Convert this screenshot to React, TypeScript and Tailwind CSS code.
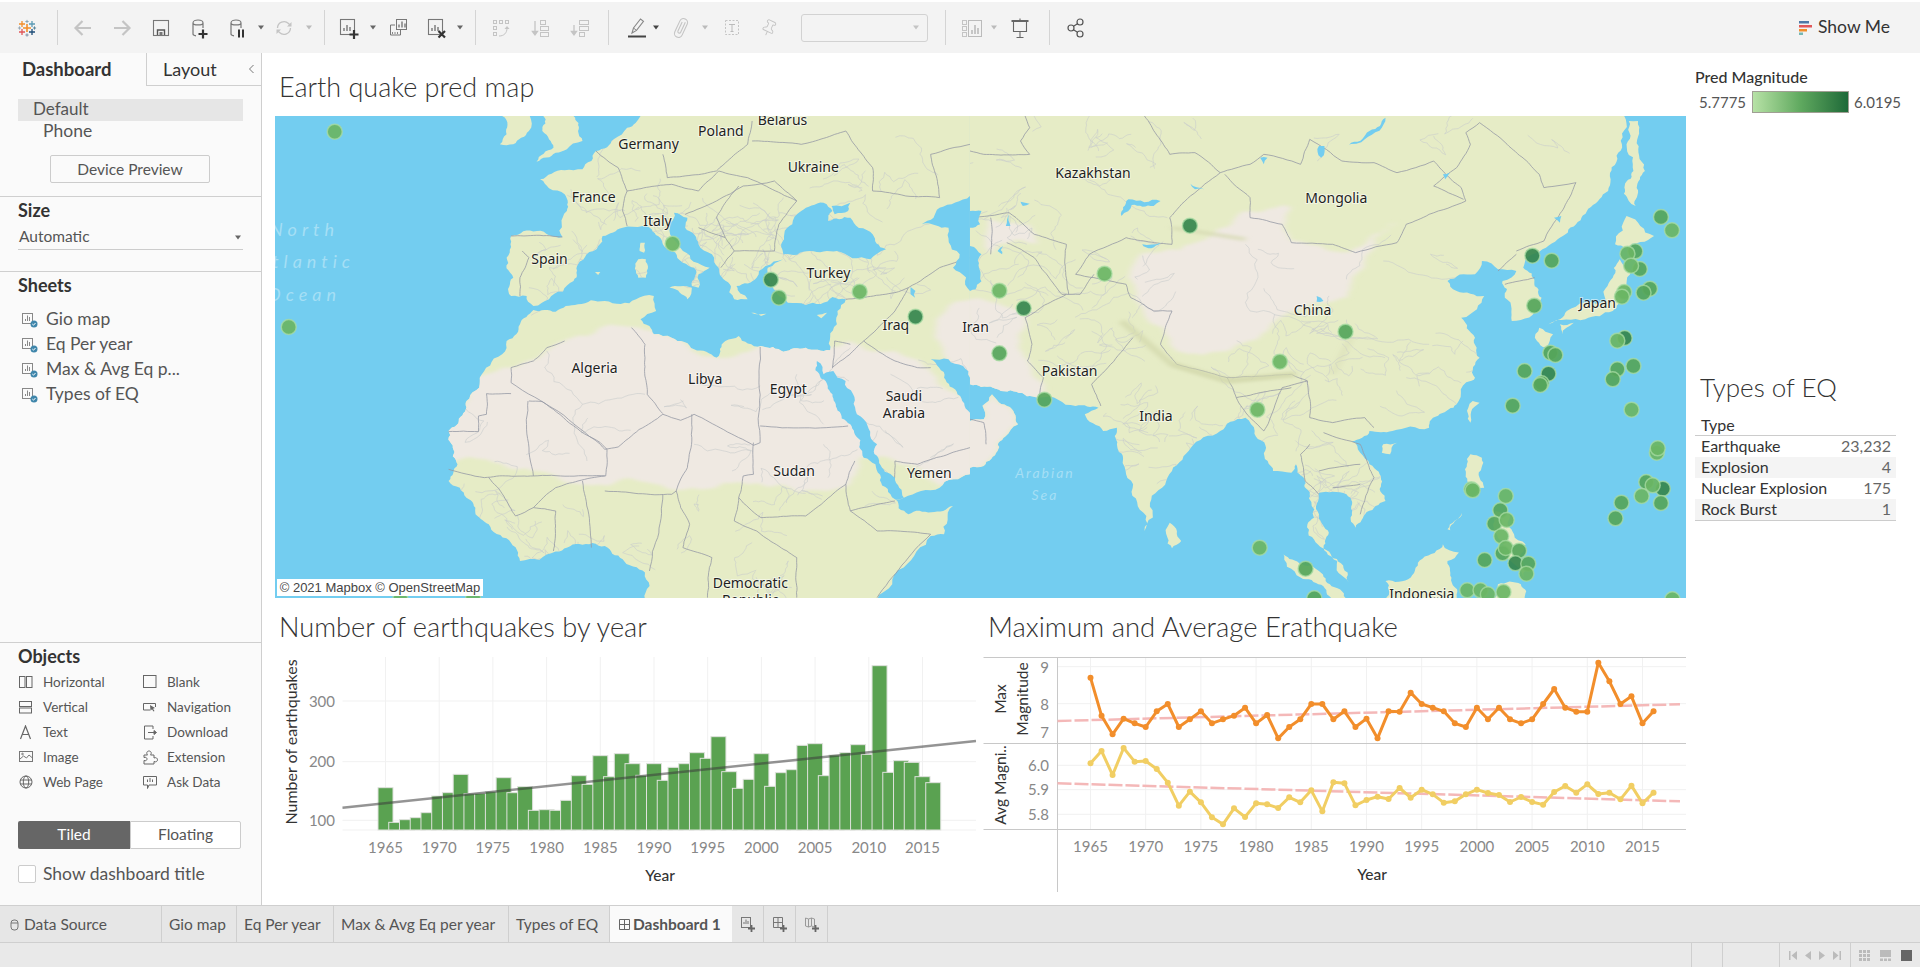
import React from 'react';
import { Pin } from 'lucide-react';

const Z10 = 'translate(-5,-5) scale(0.4464,0.3333)';
const Z11 = 'translate(695,-5) scale(0.4591,0.3333)';
const x10 = (z: number) => z * 0.4464 - 5;
const x11 = (z: number) => z * 0.4591 + 695;
const yz = (z: number) => z / 3 - 5;

const OCEAN = '#73cdf0';
const LAND = '#e6ecc6';
const SAND = '#efe9e2';

const hash = (a: number, b: number) => {
  const s = Math.sin(a * 12.9898 + b * 78.233) * 43758.5453;
  return s - Math.floor(s);
};
type Pt = [number, number];
const split = (a: Pt, b: Pt, depth: number, amp: number, out: Pt[]) => {
  const dx = b[0] - a[0];
  const dy = b[1] - a[1];
  const len = Math.hypot(dx, dy);
  const seam = (a[0] === b[0] && (a[0] === 0 || a[0] === 1568)) || (a[1] === b[1] && (a[1] <= 15 || a[1] >= 1460));
  if (depth === 0 || len < 12 || seam) {
    out.push(b);
    return;
  }
  const k = (hash(a[0] + b[0], a[1] + b[1]) - 0.5) * amp;
  const m: Pt = [(a[0] + b[0]) / 2 - dy * k, (a[1] + b[1]) / 2 + dx * k];
  split(a, m, depth - 1, amp, out);
  split(m, b, depth - 1, amp, out);
};
// breaks straight polygon edges into an irregular coast or border line
const rough = (d: string, amp = 0.32) => {
  let res = '';
  let cur: Pt = [0, 0];
  let start: Pt = [0, 0];
  const re = /([MLZ])\s*([-\d.]*)\s*([-\d.]*)/g;
  let m: RegExpExecArray | null;
  const f = (n: number) => n.toFixed(1);
  while ((m = re.exec(d))) {
    if (m[1] === 'M') {
      cur = [+m[2], +m[3]];
      start = cur;
      res += `M${f(cur[0])} ${f(cur[1])}`;
    } else {
      const to: Pt = m[1] === 'L' ? [+m[2], +m[3]] : start;
      const out: Pt[] = [];
      split(cur, to, 4, amp, out);
      out.forEach((p) => (res += `L${f(p[0])} ${f(p[1])}`));
      cur = to;
      if (m[1] === 'Z') res += 'Z';
    }
  }
  return res;
};
// thin admin lines inside a box, clipped to land later
const web = (x0: number, y0: number, x1: number, y1: number, n: number, seed: number) => {
  let d = '';
  for (let i = 0; i < n; i++) {
    let x = x0 + hash(i + seed, 3.1) * (x1 - x0);
    let y = y0 + hash(i + seed, 7.7) * (y1 - y0);
    d += `M${x.toFixed(0)} ${y.toFixed(0)} `;
    for (let j = 0; j < 3; j++) {
      x += (hash(i + j, seed + 1.3) - 0.5) * 130;
      y += (hash(j + seed, i + 2.9) - 0.5) * 130;
      d += `L${x.toFixed(0)} ${y.toFixed(0)} `;
    }
  }
  return d;
};

const landWest =
  'M830 15 L1568 15 L1568 1090 L1500 1130 L1420 1160 L1400 1165 L1430 1210 L1530 1185 L1510 1270 L1480 1275 L1360 1465 L840 1465 L840 1385 L790 1345 L750 1305 L640 1322 L560 1350 L490 1240 L440 1160 L400 1110 L420 1060 L400 960 L440 870 L470 800 L520 730 L530 690 L560 640 L590 597 L640 602 L690 580 L750 570 L820 565 L860 555 L865 600 L830 625 L850 645 L860 670 L900 680 L950 715 L1000 740 L1020 690 L1050 675 L1100 705 L1150 722 L1200 710 L1255 718 L1270 640 L1290 565 L1260 558 L1200 582 L1160 575 L1120 520 L1115 470 L1150 445 L1110 465 L1090 500 L1045 525 L1070 565 L1040 565 L1030 520 L1005 470 L990 430 L960 400 L930 350 L935 320 L905 305 L895 335 L925 420 L985 470 L960 490 L960 530 L945 525 L950 470 L925 455 L880 400 L855 355 L835 345 L790 350 L745 375 L735 405 L690 460 L680 510 L625 565 L590 585 L575 555 L540 555 L545 500 L530 440 L540 375 L655 378 L665 300 L660 250 L625 232 L605 205 L660 178 L700 175 L720 150 L730 120 L770 85 L800 50 Z';
const islandsWest = [
  'M612 15 L680 15 L690 60 L700 90 L665 115 L640 125 L597 152 L635 110 L625 85 L610 60 Z',
  'M520 15 L582 15 L580 60 L545 100 L515 100 L530 70 Z',
  'M895 530 L945 530 L935 565 Z',
  'M825 445 L842 445 L842 500 L825 500 Z',
  'M830 395 L840 395 L838 425 L828 420 Z',
  'M1078 605 L1112 608 L1100 615 Z',
  'M1225 612 L1248 605 L1235 622 Z',
  'M728 483 L740 483 L735 492 Z',
];
const waterWest = [
  'M1145 400 L1170 340 L1190 300 L1240 275 L1260 300 L1250 330 L1300 320 L1350 370 L1380 415 L1345 445 L1270 420 L1210 420 L1150 430 Z',
  'M1225 750 L1240 790 L1262 780 L1330 925 L1360 1000 L1400 1100 L1420 1160 L1400 1165 L1390 1150 L1330 1040 L1300 940 L1260 850 Z',
  'M1480 745 L1520 745 L1568 800 L1568 905 L1540 850 L1510 800 Z',
  'M1568 255 L1500 290 L1460 340 L1520 350 L1545 430 L1530 470 L1568 540 Z',
  'M1435 528 L1446 540 L1445 560 L1435 550 Z',
  'M1258 285 L1300 275 L1295 300 L1265 310 Z',
];
const sandWest = [
  'M540 770 L660 690 L760 640 L830 650 L870 670 L1000 740 L1100 700 L1210 700 L1260 710 L1300 690 L1400 720 L1480 780 L1600 920 L1600 1100 L1500 1125 L1410 1060 L1320 1040 L1280 1130 L1100 1120 L1000 1130 L800 1100 L600 1080 L380 1060 L380 960 L450 800 Z',
  'M1490 650 L1540 570 L1600 560 L1600 830 L1560 790 L1510 735 Z',
];
const bordersWest = [
  'M540 848 L485 848 L485 910 L467 915 L467 962 L400 962',
  'M540 770 L540 815 L740 1000 L750 1015 L780 1008 L880 910 L920 928 L950 910 L1083 1003 L1098 995 L1098 708',
  'M1083 995 L1083 1090 L1060 1095 L1050 1160 L1100 1220 L1200 1215 L1290 1120 L1310 1050',
  'M1098 945 L1295 945',
  'M580 870 L610 872 L740 995 L755 1015 L752 1095 L590 1095 L578 870',
  'M840 740 L845 850 L880 908 M810 650 L840 700 L840 740',
  'M660 690 L620 710 L590 750 L540 770',
  'M945 910 L935 1070 L910 1140 L920 1190 L940 1240 L925 1310 L990 1340 L980 1460',
  'M400 1075 L480 1100 L590 1095 M490 1100 L550 1215 L590 1190 L640 1200 L635 1320 M700 1110 L720 1310 M750 1095 L690 1110 L640 1130 L590 1190',
  'M750 1140 L900 1150 L910 1140 M880 1150 L850 1380 M1050 1160 L1040 1230 L1090 1260 L1180 1340 L1180 1460',
  'M1290 1120 L1300 1200 L1400 1170 M1300 1200 L1360 1260 L1480 1270 L1360 1460 M1260 770 L1330 690 L1400 750 L1450 770 L1480 770',
  'M1400 1050 L1450 1060 L1568 1010 M1400 1050 L1405 1160 M1300 700 L1265 690 L1260 770 M1330 690 L1400 600 L1430 530',
  'M1290 565 L1400 545 L1430 530 L1500 470 L1568 440',
  'M540 375 L655 378 M565 420 L580 440 L560 500 L560 555',
  'M730 120 L780 170 L800 240 L790 300 L800 345',
  'M800 240 L900 220 L960 240 L1005 180 L1070 200 L1180 270',
  'M880 130 L890 200 L1000 180 L1070 100 L1080 30',
  'M1080 90 L1190 100 L1290 60 L1350 170 L1350 240 L1500 260 L1480 130 L1568 100',
  'M930 310 L1000 270 L1060 225 L1130 210 L1180 270 L1140 340 L1130 420 L1040 420 L1010 470',
  'M960 350 L1020 380 L1040 420 M1050 225 L1000 320 L1020 380',
];
const minorWest = [
  'M700 880 L710 1050 M620 720 L700 880 L840 850 M940 820 L1098 825 M950 1000 L1083 1020 M1180 790 L1240 940 M1240 1000 L1250 1100',
  web(720, 180, 1500, 520, 46, 1),
  web(1000, 300, 1140, 470, 22, 5),
  web(1130, 450, 1430, 560, 14, 9),
  web(420, 1100, 1400, 1450, 34, 13),
  web(450, 800, 1300, 1080, 10, 17),
  web(1300, 800, 1560, 1040, 6, 21),
  web(540, 380, 680, 550, 6, 25),
];

const landEast =
  'M0 15 L1425 15 L1420 100 L1390 240 L1320 340 L1280 385 L1225 430 L1205 470 L1245 560 L1245 590 L1180 630 L1165 560 L1160 510 L1190 480 L1150 475 L1115 450 L1100 490 L1040 510 L1060 540 L1120 555 L1070 620 L1100 680 L1110 740 L1100 800 L1060 880 L1000 950 L920 960 L870 960 L830 990 L870 1060 L905 1170 L840 1250 L820 1150 L760 1145 L760 1210 L770 1310 L825 1415 L800 1350 L735 1240 L740 1150 L710 1060 L700 1085 L660 1080 L620 960 L600 920 L545 960 L440 1080 L430 1100 L380 1260 L340 1090 L320 1000 L320 950 L290 960 L250 910 L280 890 L230 885 L150 860 L50 830 L0 820 Z';
const islandsEast = [
  'M0 930 L30 925 L48 850 L105 940 L60 1020 L30 1065 L0 1070 Z',
  'M1430 315 L1490 375 L1430 410 L1405 400 Z',
  'M1415 445 L1440 480 L1430 560 L1400 600 L1340 625 L1260 640 L1300 600 L1385 570 L1400 500 Z',
  'M1240 650 L1270 670 L1255 710 L1235 690 Z',
  'M1285 640 L1315 635 L1290 670 Z',
  'M1435 30 L1455 30 L1470 180 L1450 285 L1435 270 L1445 180 L1430 100 Z',
  'M1095 870 L1110 875 L1090 935 L1085 910 Z',
  'M900 1000 L930 995 L915 1030 L897 1025 Z',
  'M435 1235 L460 1290 L440 1312 L430 1280 Z',
  'M680 1325 L760 1380 L825 1465 L790 1465 L720 1400 Z',
  'M905 1410 L960 1400 L1030 1300 L1065 1325 L1040 1350 L1060 1465 L905 1465 Z',
  'M1090 1030 L1115 1040 L1110 1100 L1120 1130 L1085 1145 L1080 1090 Z',
  'M1145 1200 L1175 1210 L1185 1270 L1210 1300 L1205 1400 L1160 1330 L1150 1280 Z',
  'M1072 1205 L1040 1255 L1046 1258 Z',
  'M1150 1420 L1200 1420 L1210 1465 L1140 1465 Z',
];
const sandEast = [
  'M370 430 L530 370 L600 300 L700 290 L700 390 L830 420 L870 380 L930 330 L860 450 L820 560 L700 600 L560 720 L450 720 L420 650 L360 570 Z',
  'M45 320 L130 340 L150 400 L60 400 L45 430 Z',
  'M-30 560 L40 570 L130 600 L135 780 L160 860 L50 840 L-30 830 Z',
  'M-30 920 L30 925 L48 850 L105 940 L60 1020 L30 1065 L-30 1080 Z',
];
const waterEast = [
  'M0 300 L25 300 L22 340 L0 350 Z',
  'M0 405 L25 430 L12 535 L0 540 Z',
  'M820 105 L860 85 L905 20 L870 60 L830 95 Z',
  'M330 315 L345 265 L415 270 L400 285 L352 282 Z',
  'M85 310 L88 345 L78 345 Z',
  'M480 218 L510 235 L490 235 Z',
  'M632 140 L648 140 L640 160 Z',
  'M760 105 L772 105 L765 140 Z',
  'M375 400 L415 395 L395 412 Z',
  'M755 555 L770 570 L755 572 Z',
  'M1030 190 L1045 185 L1035 205 Z',
  'M1272 320 L1288 315 L1285 335 Z',
  'M60 420 L72 405 L70 430 Z',
  'M110 272 L130 278 L115 285 Z',
];
const bordersEast = [
  'M0 120 L30 130 L130 130 L110 90 L130 50 L120 15 M380 15 L435 130 L490 125 L545 185',
  'M545 185 L610 160 L640 130 L720 160 L740 85 L810 150 L880 155 L930 185 L1010 150 L1070 230 L1080 270 L1000 310 L950 340 L930 395 L840 425 L790 400 L700 395 L680 340 L610 320 L610 260 L555 190',
  'M545 185 L480 255 L435 320 L440 400 L340 380 L260 430 L230 490 L270 500 L340 520 L350 560 L400 600 L440 600 L415 700 L450 760 L560 800 L700 790 L735 810 L740 920 L790 935 L860 920 L880 950',
  'M1320 215 L1250 230 L1240 190 L1170 100 L1110 35 L1080 65 L1090 100 L1060 170 L1010 225 L1075 265',
  'M1190 420 L1250 390 L1280 320 L1320 215 M1150 480 L1190 430 M1165 520 L1230 500',
  'M45 320 L45 430 M0 320 L85 305 L140 370 L210 400 L215 550 M80 395 L140 440 L200 550 L240 550 L270 490',
  'M120 620 L135 700 L125 750 L160 800 L150 860 M120 620 L210 550',
  'M355 680 L265 820 L285 885 M0 925 L30 935 L35 1000',
  'M580 860 L610 920 L640 960 M735 810 L680 830 L660 900 L640 960 M560 800 L580 860 L700 830',
  'M740 1000 L720 1030 L730 1110 L760 1150 M770 965 L850 1000 L880 1100 L850 1210 M760 1080 L850 1060 M850 1120 L790 1130',
];
const minorEast = [
  'M200 200 L300 250 L430 320 M260 15 L280 120 M600 400 L610 600 L820 680 M820 680 L1000 700 M900 450 L1060 500 M950 800 L1060 880',
  web(0, 130, 450, 620, 24, 31),
  web(730, 1000, 880, 1230, 20, 35),
  web(700, 450, 1100, 900, 24, 39),
  web(300, 800, 620, 1100, 16, 43),
  web(0, 20, 1300, 120, 12, 47),
  web(180, 500, 400, 750, 16, 51),
  web(550, 780, 760, 1000, 14, 55),
];

const markersWest: [number, number, string][] = [
  [145, 62, 'l'], [902, 398, 'l'], [1122, 506, 'd'], [1140, 560, 'm'], [1321, 542, 'l'], [1446, 617, 'd'], [42, 648, 'l'], [292, 1465, 'l'], [455, 1462, 'l'],
];
const markersEast: [number, number, string][] = [
  [479, 344, 'd'], [293, 488, 'l'], [64, 539, 'l'], [117, 592, 'd'], [64, 727, 'm'], [162, 866, 'm'], [626, 896, 'l'], [675, 752, 'l'], [818, 662, 'm'],
  [1225, 434, 'd'], [1267, 449, 'm'], [1229, 584, 'm'], [1505, 318, 'm'], [1529, 358, 'l'], [1449, 421, 'm'], [1432, 428, 'l'], [1459, 474, 'm'], [1440, 464, 'l'],
  [1425, 543, 'l'], [1420, 557, 'l'], [1481, 533, 'm'], [1467, 545, 'm'], [1426, 681, 'd'], [1410, 689, 'l'], [1264, 725, 'm'], [1275, 732, 'm'], [1208, 780, 'm'],
  [1260, 788, 'd'], [1245, 817, 'm'], [1242, 822, 'm'], [1445, 765, 'm'], [1410, 775, 'm'], [1400, 805, 'm'], [1182, 884, 'm'], [1441, 896, 'l'], [1496, 1025, 'l'],
  [1498, 1012, 'l'], [1473, 1113, 'm'], [1509, 1133, 'd'], [1487, 1123, 'l'], [1463, 1155, 'l'], [1419, 1175, 'm'], [1505, 1176, 'm'], [1406, 1222, 'm'], [1092, 1135, 'l'],
  [1095, 1138, 'l'], [1167, 1155, 'l'], [1155, 1198, 'm'], [1142, 1238, 'm'], [1169, 1227, 'l'], [1160, 1327, 'm'], [1157, 1276, 'l'], [1167, 1311, 'l'], [1196, 1319, 'm'],
  [1121, 1347, 'm'], [1188, 1357, 'd'], [1216, 1358, 'm'], [1212, 1388, 'l'], [631, 1310, 'l'], [731, 1373, 'm'], [750, 1462, 'm'], [1083, 1438, 'l'], [1112, 1438, 'l'],
  [1128, 1450, 'l'], [1162, 1443, 'l'], [1530, 1465, 'l'],
];
const markerFill: Record<string, string> = { l: '#6ab564', m: '#55a55a', d: '#35854d' };

const labelsWest: [string, number, number][] = [
  ['Belarus', 1148, 27], ['Poland', 1010, 60], ['Germany', 848, 98], ['Ukraine', 1217, 168], ['France', 725, 258], ['Italy', 868, 330], ['Spain', 626, 445],
  ['Turkey', 1251, 487], ['Iraq', 1402, 642], ['Algeria', 727, 770], ['Libya', 975, 805], ['Egypt', 1161, 833], ['Saudi', 1420, 855], ['Arabia', 1420, 905],
  ['Yemen', 1477, 1085], ['Sudan', 1174, 1080], ['Democratic', 1076, 1417], ['Republic', 1076, 1468],
];
const labelsEast: [string, number, number][] = [
  ['Iran', 12, 647], ['Kazakhstan', 268, 185], ['Mongolia', 798, 262], ['China', 746, 598], ['Pakistan', 217, 781], ['India', 405, 915], ['Japan', 1367, 575], ['Indonesia', 984, 1450],
];

function MapLayer({ id, transform, land, islands, sand, water, borders, minor }: { id: string; transform: string; land: string; islands: string[]; sand: string[]; water: string[]; borders: string[]; minor: string[] }) {
  const shapes = [land, ...islands].map((d) => rough(d));
  return (
    <g transform={transform}>
      <clipPath id={id}>{shapes.map((d, i) => <path key={i} d={d} />)}</clipPath>
      {shapes.map((d, i) => <path key={i} d={d} fill={LAND} />)}
      <g clipPath={`url(#${id})`}>
        <g filter="url(#soft)">{sand.map((d) => <path key={d} d={rough(d)} fill={SAND} />)}</g>
        {minor.map((d, i) => <path key={i} d={rough(d)} fill="none" stroke="#c9cccd" strokeWidth="0.6" vectorEffect="non-scaling-stroke" />)}
      </g>
      {borders.map((d) => <path key={d} d={rough(d, 0.07)} fill="none" stroke="#9599a5" strokeWidth="0.8" vectorEffect="non-scaling-stroke" />)}
      {water.map((d) => <path key={d} d={rough(d)} fill={OCEAN} />)}
    </g>
  );
}

function WorldMap() {
  return (
    <div className="relative h-[482px] w-[1411px] overflow-hidden">
      <svg width="1411" height="482" viewBox="0 0 1411 482" className="block">
        <defs>
          <filter id="soft" x="-10%" y="-10%" width="120%" height="120%"><feGaussianBlur stdDeviation="7 5" /></filter>
        </defs>
        <rect width="1411" height="482" fill={OCEAN} />
        <MapLayer id="clipW" transform={Z10} land={landWest} islands={islandsWest} sand={sandWest} water={waterWest} borders={bordersWest} minor={minorWest} />
        <MapLayer id="clipE" transform={Z11} land={landEast} islands={islandsEast} sand={sandEast} water={waterEast} borders={bordersEast} minor={minorEast} />
        <g transform={Z11} filter="url(#soft)">
          <path d="M330 630 L440 760 L560 810 L710 790" fill="none" stroke="#d3d8ac" strokeWidth="6" vectorEffect="non-scaling-stroke" opacity="0.8" />
          <path d="M440 350 L600 385 M830 680 L790 790" fill="none" stroke="#d6dab2" strokeWidth="4" vectorEffect="non-scaling-stroke" opacity="0.7" />
        </g>
        <g fontStyle="italic" fill="#a5dff5" fontSize="18" letterSpacing="5" textAnchor="end">
          <text x="64" y="120">North</text>
          <text x="80" y="152">Atlantic</text>
          <text x="66" y="185">Ocean</text>
        </g>
        <g fontStyle="italic" fill="#a5dff5" fontSize="14" letterSpacing="2" textAnchor="middle">
          <text x="770" y="362">Arabian</text>
          <text x="770" y="384">Sea</text>
        </g>
        <g fontSize="14" fill="#1f1f1f" textAnchor="middle" className="font-['Noto_Sans',sans-serif]" stroke="#ffffff" strokeOpacity="0.55" strokeWidth="2" paintOrder="stroke">
          {labelsWest.map(([t, x, y]) => <text key={t} x={x10(x)} y={yz(y) + 5}>{t}</text>)}
          {labelsEast.map(([t, x, y]) => <text key={t} x={x11(x)} y={yz(y) + 5}>{t}</text>)}
        </g>
        {markersWest.map(([x, y, c]) => (
          <circle key={`w${x}${y}`} cx={x10(x)} cy={yz(y)} r="7.5" fill={markerFill[c]} fillOpacity="0.92" stroke="#a9dca4" strokeOpacity="0.75" strokeWidth="1.5" />
        ))}
        {markersEast.map(([x, y, c]) => (
          <circle key={`e${x}${y}`} cx={x11(x)} cy={yz(y)} r="7.5" fill={markerFill[c]} fillOpacity="0.92" stroke="#a9dca4" strokeOpacity="0.75" strokeWidth="1.5" />
        ))}
      </svg>
      <div className="absolute left-[2px] top-[463px] h-[17px] w-[206px] bg-white text-center text-[13px] leading-[17px] text-[#444] font-['Liberation_Sans',sans-serif]">
        © 2021 Mapbox © OpenStreetMap
      </div>
    </div>
  );
}

const barTops = [560, 664, 656, 650, 635, 585, 575, 520, 578, 577, 572, 530, 575, 557, 628, 626, 628, 598, 524, 550, 464, 527, 458, 488, 523, 488, 538, 499, 488, 455, 472, 407, 512, 562, 535, 458, 556, 515, 506, 433, 428, 524, 462, 455, 431, 460, 194, 514, 479, 484, 527, 545];
const maxMag = [230, 344, 400, 353, 367, 378, 331, 309, 378, 355, 331, 367, 355, 344, 320, 367, 342, 412, 378, 355, 309, 309, 355, 331, 378, 353, 412, 331, 332, 275, 309, 320, 331, 367, 378, 320, 355, 320, 355, 367, 355, 309, 264, 320, 332, 332, 185, 241, 309, 286, 367, 331];
const avgMag = [487, 450, 522, 441, 482, 480, 504, 545, 614, 572, 604, 649, 670, 622, 648, 607, 610, 621, 589, 604, 568, 631, 544, 547, 613, 597, 587, 594, 561, 590, 566, 580, 605, 601, 580, 566, 576, 582, 603, 588, 603, 611, 573, 555, 575, 550, 579, 575, 595, 554, 607, 575];
const ticks = [1965, 1970, 1975, 1980, 1985, 1990, 1995, 2000, 2005, 2010, 2015];

function BarChart() {
  const bx = (i: number) => 385.5 + i * 10.74;
  return (
    <svg width="708" height="255" viewBox="275 650 708 255" className="block">
      {ticks.map((t, i) => <line key={t} x1={bx(i * 5)} x2={bx(i * 5)} y1="656" y2="829" stroke="#f1f1f1" />)}
      {[700, 760.7, 819.3, 829].map((y) => <line key={y} x1="342.5" x2="976" y1={y} y2={y} stroke="#f1f1f1" />)}
      {barTops.map((t, i) => {
        const top = 600 + t / 3;
        return <rect key={i} x={bx(i) - 7.5} y={top} width="15" height={829 - top} fill="#5aa251" stroke="#dfe2dd" strokeWidth="1" />;
      })}
      <line x1="342.5" y1="806.7" x2="976" y2="740" stroke="#3c3c3c" strokeOpacity="0.55" strokeWidth="2.5" />
      <g fontSize="15" fill="#888" textAnchor="end">
        <text x="335" y="706">300</text>
        <text x="335" y="766">200</text>
        <text x="335" y="825">100</text>
      </g>
      <g fontSize="15" fill="#888" textAnchor="middle">
        {ticks.map((t, i) => <text key={t} x={bx(i * 5)} y="852">{t}</text>)}
      </g>
      <text x="660" y="880" textAnchor="middle" fontSize="15.5" fill="#333" fontWeight="500">Year</text>
      <text transform="translate(297,741) rotate(-90)" textAnchor="middle" fontSize="16" fill="#333">Number of earthquakes</text>
    </svg>
  );
}

function LineChart() {
  const lx = (i: number) => 1090.5 + i * 11.04;
  const pts = (a: number[]) => a.map((z, i) => `${lx(i)},${600 + z / 3}`).join(' ');
  return (
    <svg width="703" height="255" viewBox="983 650 703 255" className="block">
      {ticks.map((t, i) => <line key={t} x1={lx(i * 5)} x2={lx(i * 5)} y1="657" y2="829" stroke="#f1f1f1" />)}
      {[665.7, 702.7, 764.3, 788.7, 813.3].map((y) => <line key={y} x1="1057" x2="1686" y1={y} y2={y} stroke="#f1f1f1" />)}
      <line x1="983.5" x2="1686" y1="656.5" y2="656.5" stroke="#c8c8c8" />
      <line x1="983.5" x2="1686" y1="742.5" y2="742.5" stroke="#c8c8c8" />
      <line x1="983.5" x2="1686" y1="828.5" y2="828.5" stroke="#c8c8c8" />
      <line x1="1057.5" x2="1057.5" y1="656" y2="891" stroke="#c8c8c8" />
      <line x1="1057.5" y1="720" x2="1680" y2="703.3" stroke="#f4b8b8" strokeWidth="2.5" strokeDasharray="14 3" />
      <line x1="1057.5" y1="782.3" x2="1680" y2="800.3" stroke="#f4b8b8" strokeWidth="2.5" strokeDasharray="14 3" />
      <polyline points={pts(maxMag)} fill="none" stroke="#f28e2b" strokeWidth="3" strokeLinejoin="round" />
      {maxMag.map((z, i) => <circle key={i} cx={lx(i)} cy={600 + z / 3} r="3" fill="#f28e2b" />)}
      <polyline points={pts(avgMag)} fill="none" stroke="#f1ce63" strokeWidth="3" strokeLinejoin="round" />
      {avgMag.map((z, i) => <circle key={i} cx={lx(i)} cy={600 + z / 3} r="3" fill="#f1ce63" />)}
      <g fontSize="15" fill="#888" textAnchor="end">
        <text x="1049" y="672">9</text>
        <text x="1049" y="709">8</text>
        <text x="1049" y="737">7</text>
        <text x="1049" y="770">6.0</text>
        <text x="1049" y="794">5.9</text>
        <text x="1049" y="819">5.8</text>
      </g>
      <g fontSize="15" fill="#888" textAnchor="middle">
        {ticks.map((t, i) => <text key={t} x={lx(i * 5)} y="851">{t}</text>)}
      </g>
      <text x="1372" y="879" textAnchor="middle" fontSize="15.5" fill="#333" fontWeight="500">Year</text>
      <g textAnchor="middle" fontSize="15.5" fill="#333">
        <text transform="translate(1006,698) rotate(-90)">Max</text>
        <text transform="translate(1028,698) rotate(-90)">Magnitude</text>
        <text transform="translate(1006,784) rotate(-90)">Avg Magni..</text>
      </g>
    </svg>
  );
}

/* toolbar icons */
const Ico = ({ children, className = '' }: { children: React.ReactNode; className?: string }) => (
  <svg width="24" height="24" viewBox="0 0 24 24" fill="none" className={`shrink-0 ${className}`}>{children}</svg>
);
const Caret = ({ className = '', color = '#666' }: { className?: string; color?: string }) => (
  <svg width="8" height="5" viewBox="0 0 8 5" className={`shrink-0 ${className}`}><path d="M1 0.5h6L4 4.5z" fill={color} /></svg>
);
const Sep = ({ className = '' }: { className?: string }) => <div className={`h-[35px] w-px shrink-0 bg-[#d4d4d4] ${className}`} />;
const Plus = ({ x, y }: { x: number; y: number }) => <path d={`M${x - 4.5} ${y}h9M${x} ${y - 4.5}v9`} stroke="#333" strokeWidth="2.2" />;
const Cyl = ({ stroke = '#777' }: { stroke?: string }) => (
  <path d="M6 7c0-4 10-4 10 0v5M6 7c0 2.6 10 2.6 10 0M6 7v11c0 1 1 1.6 3 1.8" stroke={stroke} strokeWidth="1.2" />
);
const Bars = ({ x, y, c = '#777' }: { x: number; y: number; c?: string }) => (
  <path d={`M${x} ${y}v-3M${x + 3} ${y}v-6M${x + 6} ${y}v-4`} stroke={c} strokeWidth="1.4" />
);

function Logo() {
  const p = (x: number, y: number, s: number, c: string, w = 1.3) => (
    <path key={`${x}${y}`} d={`M${x - s} ${y}h${2 * s}M${x} ${y - s}v${2 * s}`} stroke={c} strokeWidth={w} />
  );
  return (
    <Ico className="ml-[15px]">
      {p(12, 12, 4, '#f28e2b', 1.6)}
      {p(7, 8, 3, '#f28e2b')}
      {p(17, 8, 3, '#5b9bb5')}
      {p(7, 16, 3, '#e15759')}
      {p(17, 16, 3, '#1f4e79')}
      {p(12, 5.5, 1.6, '#8aa5b5', 1)}
      {p(12, 19, 1.6, '#7f8fa6', 1)}
      {p(4.5, 12, 1.6, '#9aa9b5', 1)}
      {p(19.5, 12, 1.6, '#59879b', 1)}
    </Ico>
  );
}

function Toolbar() {
  return (
    <div className="mt-[2px] flex h-[51px] shrink-0 items-center bg-[#f3f3f3]">
      <Logo />
      <Sep className="ml-[18px]" />
      <Ico className="ml-[13px]"><path d="M20 12H5M11.5 5l-7 7 7 7" stroke="#c4c4c4" strokeWidth="2.2" /></Ico>
      <Ico className="ml-[15px]"><path d="M4 12h15M12.5 5l7 7-7 7" stroke="#c4c4c4" strokeWidth="2.2" /></Ico>
      <Ico className="ml-[15px]"><rect x="4.5" y="4.5" width="15" height="15" stroke="#777" strokeWidth="1.1" /><path d="M8.5 19v-5h7v5" stroke="#555" strokeWidth="1.4" /><rect x="10.5" y="16" width="3" height="3" fill="#777" /></Ico>
      <Ico className="ml-[14px]"><Cyl /><Plus x={16} y={18} /></Ico>
      <Ico className="ml-[14px]"><Cyl /><path d="M14 13.5v8M18 13.5v8" stroke="#333" strokeWidth="2" /></Ico>
      <Caret className="ml-[8px]" />
      <Ico className="ml-[7px]"><path d="M5.5 12a6.5 6.5 0 0 1 11-4.5l2 2M18.5 12a6.5 6.5 0 0 1-11 4.5l-2-2" stroke="#c4c4c4" strokeWidth="1.3" /><path d="M19.5 6v4.5H15M4.5 18v-4.5H9" fill="#c4c4c4" /></Ico>
      <Caret className="ml-[9px]" color="#bbb" />
      <Sep className="ml-[11px]" />
      <Ico className="ml-[11px]"><rect x="4.5" y="3.5" width="14" height="15" stroke="#777" strokeWidth="1.1" /><Bars x={8} y={15} /><Plus x={18} y={18.5} /></Ico>
      <Caret className="ml-[9px]" />
      <Ico className="ml-[9px]"><rect x="10.5" y="3.5" width="10" height="10" fill="#f3f3f3" stroke="#777" /><path d="M9 9H4.5v10h10v-5" stroke="#777" /><Bars x={13} y={11.5} /><path d="M6.5 16v2M9 16v2M11.5 16v2" stroke="#888" /></Ico>
      <Ico className="ml-[14px]"><rect x="4.5" y="3.5" width="14" height="15" stroke="#777" strokeWidth="1.1" /><Bars x={8} y={15} /><path d="M14.5 15l6.5 6.5M21 15l-6.5 6.5" stroke="#333" strokeWidth="2.2" /></Ico>
      <Caret className="ml-[8px]" />
      <Sep className="ml-[11px]" />
      <Ico className="ml-[13px]"><g stroke="#c4c4c4"><rect x="4.5" y="4.5" width="3" height="3" /><rect x="10.5" y="4.5" width="3" height="3" /><rect x="16.5" y="4.5" width="3" height="3" /><rect x="4.5" y="10.5" width="3" height="3" /><rect x="4.5" y="16.5" width="3" height="3" /><path d="M10 20c5 0 8-3 8-8" /></g><path d="M15.5 13l2.5-3 2.5 3z" fill="#c4c4c4" /></Ico>
      <Ico className="ml-[16px]"><path d="M6 5v14M3.5 15.5L6 19l2.5-3.5z" stroke="#c4c4c4" strokeWidth="1.3" fill="#c4c4c4" /><g stroke="#c4c4c4"><rect x="11.5" y="4.5" width="5" height="4" /><rect x="11.5" y="10.5" width="8" height="4" /><rect x="11.5" y="16.5" width="8" height="4" /></g></Ico>
      <Ico className="ml-[15px]"><path d="M6 9v10M3.5 15.5L6 19l2.5-3.5z" stroke="#c4c4c4" strokeWidth="1.3" fill="#c4c4c4" /><g stroke="#c4c4c4"><rect x="11.5" y="4.5" width="9" height="4" /><rect x="11.5" y="10.5" width="9" height="4" /><rect x="11.5" y="16.5" width="5" height="4" /></g></Ico>
      <Sep className="ml-[16px]" />
      <Ico className="ml-[16px]"><path d="M7 17l1.5-5 7-9 3 2.4-7 9z" stroke="#888" strokeWidth="1.1" /><path d="M8.5 12l3 2.4" stroke="#888" /><rect x="3" y="19.5" width="18" height="2" fill="#444" /></Ico>
      <Caret className="ml-[3px]" color="#444" />
      <Ico className="ml-[9px]"><g transform="rotate(25 12 12)" stroke="#c4c4c4" strokeWidth="1.1"><rect x="8" y="2" width="8" height="20" rx="4" /><path d="M10.5 6v10a1.5 1.5 0 0 0 3 0V5" /></g></Ico>
      <Caret className="ml-[8px]" color="#bbb" />
      <Ico className="ml-[11px]"><rect x="5.5" y="4.5" width="13" height="14" stroke="#c4c4c4" strokeDasharray="2 1.5" /><path d="M9 8.5h6M12 8.5v7M10.5 15.5h3" stroke="#bbb" /></Ico>
      <div className="ml-[13px] flex h-[24px] w-[24px] shrink-0 rotate-[25deg] items-center justify-center"><Pin size={18} color="#c4c4c4" strokeWidth={1.2} /></div>
      <div className="ml-[20px] flex h-[28px] w-[127px] shrink-0 items-center justify-end rounded-[3px] border border-[#d2d2d2] pr-[7px]"><Caret color="#c4c4c4" /></div>
      <Sep className="ml-[17px]" />
      <Ico className="ml-[14px]"><g stroke="#c4c4c4"><rect x="2.5" y="4.5" width="4" height="4" /><rect x="2.5" y="10.5" width="4" height="4" /><rect x="2.5" y="16.5" width="4" height="4" /><rect x="8.5" y="4.5" width="13" height="16" stroke="#bbb" /></g><path d="M12 18v-4M15 18v-9M18 18v-6" stroke="#bbb" strokeWidth="1.6" /></Ico>
      <Caret className="ml-[6px]" color="#bbb" />
      <Ico className="ml-[10px]"><rect x="3.5" y="4" width="17" height="2" fill="#666" /><path d="M5.5 6v9.5h13V6M12 15.5v6M8.5 21.5h7M12 2.5v2" stroke="#666" strokeWidth="1.1" /></Ico>
      <Sep className="ml-[17px]" />
      <Ico className="ml-[14px]"><g stroke="#555" strokeWidth="1.2"><circle cx="7" cy="12" r="3" /><circle cx="16" cy="6" r="3" /><circle cx="16" cy="18" r="3" /><path d="M9.5 10.3l4-2.6M9.5 13.7l4 2.6" /></g></Ico>
      <div className="ml-auto mr-[30px] flex items-center gap-[6px] text-[17.5px] text-[#333]">
        <svg width="13" height="14" viewBox="0 0 13 14"><rect width="10" height="2.5" fill="#4e79a7" /><rect y="4" width="13" height="2.5" fill="#e15759" /><rect y="8" width="8" height="2.5" fill="#f28e2b" /><rect y="11.5" width="4" height="2.5" fill="#76b7b2" /></svg>
        <span>Show Me</span>
      </div>
    </div>
  );
}

function SheetIcon() {
  return (
    <svg width="16" height="16" viewBox="0 0 16 16" className="shrink-0">
      <rect x="0.5" y="1.5" width="10" height="10" fill="none" stroke="#888" />
      <path d="M3.5 9V7M5.5 9V3.5M7.5 9V5" stroke="#888" />
      <circle cx="12" cy="12" r="3.5" fill="#3f86ab" />
      <path d="M10.3 12l1.2 1.2 2-2.2" stroke="#fff" fill="none" />
    </svg>
  );
}

const objIcon: Record<string, React.ReactNode> = {
  Horizontal: <g stroke="#666"><rect x="0.5" y="1.5" width="5.5" height="11" /><rect x="7.5" y="1.5" width="5.5" height="11" /></g>,
  Vertical: <g stroke="#666"><rect x="0.5" y="1.5" width="12" height="5" /><rect x="0.5" y="8" width="12" height="5" /></g>,
  Text: <path d="M1.5 14L6.5 1l5 13M3.3 9.5h6.5" stroke="#666" strokeWidth="1.2" />,
  Image: <g stroke="#777"><rect x="0.5" y="1.5" width="13" height="10" /><path d="M1 9l3.500-3 3 2 2.500-3 3.500 3" /><circle cx="3.5" cy="4" r="0.8" /></g>,
  'Web Page': <g stroke="#666"><circle cx="7" cy="7" r="6" /><ellipse cx="7" cy="7" rx="2.7" ry="6" /><path d="M1 5h12M1 9h12" /></g>,
  Blank: <rect x="0.5" y="0.5" width="12.5" height="12" stroke="#666" />,
  Navigation: <g><path d="M7 10H0.5V3.5h12V7" stroke="#666" /><path d="M7 5l5 3-2 .7 1.5 2.3-1 .6-1.5-2.3-1.5 1.5z" fill="#666" /></g>,
  Download: <g stroke="#666"><path d="M10 4V1H1.5v13H10v-3" /><path d="M5 7.5h8" /><path d="M11 5.5l2.5 2-2.5 2z" fill="#666" /></g>,
  Extension: <path d="M1 5h3.5C3 3 4 1 6 1s3 2 1.5 4H11v3c2-1 3.5.3 3.5 1.8S13 12.5 11 11.5V14H1v-3.5c2 .8 3-.5 3-1.500S3 6.800 1 7.500z" stroke="#666" />,
  'Ask Data': <g stroke="#666"><path d="M0.5 1.5h13v8.5H6L4.5 13.5V10H0.5z" /><path d="M4.5 7V4.5M7 7V3M9.5 7V4.5" /></g>,
};

function ObjectItem({ name }: { name: string }) {
  return (
    <div className="flex h-[25px] items-center">
      <svg width="15" height="15" viewBox="0 0 15 15" fill="none" className="shrink-0">{objIcon[name]}</svg>
      <span className="ml-[9px] text-[13.5px] text-[#555]">{name}</span>
    </div>
  );
}

function Sidebar() {
  return (
    <div className="flex w-[262px] shrink-0 flex-col border-r border-[#cfcfcf] bg-[#fafafa]">
      <div className="flex h-[33px] shrink-0">
        <div className="w-[146px] pl-[22px] text-[18.5px] font-bold leading-[32px] text-[#333]">Dashboard</div>
        <div className="relative flex-1 border-b border-l border-[#cfcfcf] pl-[16px] text-[18px] leading-[33px] text-[#333]">
          Layout
          <svg width="7" height="10" viewBox="0 0 7 10" className="absolute right-[6px] top-[11px]"><path d="M5.5 1L1.5 5l4 4" fill="none" stroke="#777" /></svg>
        </div>
      </div>
      <div className="mx-[18px] mt-[13px] h-[22px] w-[225px] bg-[#e6e6e6] pl-[15px] text-[17px] leading-[20px] text-[#555]">Default</div>
      <div className="h-[22px] pl-[43px] text-[17.5px] leading-[20px] text-[#555]">Phone</div>
      <div className="ml-[50px] mt-[12px] flex h-[28px] w-[160px] items-center justify-center rounded-[2px] border border-[#ccc] pt-px text-[15.5px] text-[#555]">Device Preview</div>
      <div className="mt-[13px] border-t border-[#cfcfcf]" />
      <div className="h-[28px] pl-[18px] text-[18px] font-bold leading-[27px] text-[#333]">Size</div>
      <div className="mx-[18px] flex h-[25px] items-center justify-between border-b border-[#ccc] pl-px pr-[1px] text-[15.5px] text-[#555]">
        Automatic
        <Caret />
      </div>
      <div className="mt-[21px] border-t border-[#cfcfcf]" />
      <div className="h-[28px] pl-[18px] text-[18px] font-bold leading-[27px] text-[#333]">Sheets</div>
      <div className="mt-[7px] pl-[22px]">
        {['Gio map', 'Eq Per year', 'Max & Avg Eq p...', 'Types of EQ'].map((s) => (
          <div key={s} className="flex h-[25px] items-center gap-[8px] text-[17.5px] text-[#555]">
            <SheetIcon />
            {s}
          </div>
        ))}
      </div>
      <div className="mt-auto border-t border-[#cfcfcf]" />
      <div className="h-[27px] pl-[18px] text-[18px] font-bold leading-[26px] text-[#333]">Objects</div>
      <div className="grid grid-cols-[124px_1fr] pl-[19px]">
        {['Horizontal', 'Blank', 'Vertical', 'Navigation', 'Text', 'Download', 'Image', 'Extension', 'Web Page', 'Ask Data'].map((o) => (
          <ObjectItem key={o} name={o} />
        ))}
      </div>
      <div className="ml-[18px] mt-[26px] flex h-[28px] w-[223px] text-[15.5px]">
        <div className="flex w-[112px] items-center justify-center rounded-l-[2px] bg-[#666] text-white">Tiled</div>
        <div className="flex flex-1 items-center justify-center rounded-r-[2px] border border-[#ccc] bg-white text-[#555]">Floating</div>
      </div>
      <div className="ml-[18px] mb-[22px] mt-[16px] flex h-[18px] items-center gap-[7px] text-[17.5px] text-[#555]">
        <div className="h-[18px] w-[18px] rounded-[2px] border border-[#ccc] bg-white" />
        Show dashboard title
      </div>
    </div>
  );
}

function Dashboard() {
  return (
    <div className="flex flex-1 overflow-hidden bg-white">
      <div className="w-[1424px] shrink-0 pl-[13px]">
        <div className="flex h-[63px] items-center pl-[4px] pt-[5px] text-[27px] font-light text-[#333]">Earth quake pred map</div>
        <WorldMap />
        <div className="flex">
          <div className="w-[708px]">
            <div className="flex h-[53px] items-center pl-[4px] pt-[5px] text-[27.2px] font-light text-[#333]">Number of earthquakes by year</div>
            <BarChart />
          </div>
          <div className="w-[703px]">
            <div className="flex h-[53px] items-center pl-[5px] pt-[5px] text-[27.5px] font-light text-[#333]">Maximum and Average Erathquake</div>
            <LineChart />
          </div>
        </div>
      </div>
      <div className="flex-1 pl-[9px]">
        <div className="mt-[14px] h-[19px] text-[16px] font-medium leading-[19px] text-[#333]">Pred Magnitude</div>
        <div className="mt-[5px] flex h-[22px] items-center pl-[4px] text-[15px] text-[#555]">
          <span className="w-[53px]">5.7775</span>
          <div className="h-[22px] w-[97px] border border-[#a09f94] bg-gradient-to-r from-[#b7e2a6] via-[#5fa95f] to-[#1d6a39]" />
          <span className="ml-[5px]">6.0195</span>
        </div>
        <div className="mt-[256px] flex h-[36px] items-center pl-[5px] text-[26px] font-light text-[#333]">Types of EQ</div>
        <div className="mt-[9px] w-[201px] text-[16px] text-[#333]">
          <div className="box-content h-[21px] border-b border-[#ccc] pl-[6px] leading-[21px]">Type</div>
          {[['Earthquake', '23,232'], ['Explosion', '4'], ['Nuclear Explosion', '175'], ['Rock Burst', '1']].map(([k, v], i) => (
            <div key={k} className={`flex h-[21px] items-center justify-between pb-[2px] pl-[6px] pr-[5px] ${i % 2 ? 'bg-[#f4f4f4]' : ''}`}>
              <span>{k}</span>
              <span className="text-[#666]">{v}</span>
            </div>
          ))}
          <div className="border-t border-[#ccc]" />
        </div>
      </div>
    </div>
  );
}

function Tabs() {
  const tabs: [string, string][] = [['Gio map', 'w-[75px]'], ['Eq Per year', 'w-[97px]'], ['Max & Avg Eq per year', 'w-[175px]'], ['Types of EQ', 'w-[101px]']];
  return (
    <div className="flex h-[38px] shrink-0 border-y border-[#cfcfcf] bg-[#e6e6e6] pt-0 text-[15.5px] text-[#555]">
      <div className="flex w-[162px] items-center gap-[5px] border-r border-[#cfcfcf] pl-[10px] pt-px">
        <svg width="9" height="12" viewBox="0 0 9 12" fill="none"><rect x="1" y="1" width="7" height="10" rx="3" stroke="#777" /><path d="M1 4h7" stroke="#777" /></svg>
        Data Source
      </div>
      {tabs.map(([t, w]) => (
        <div key={t} className={`flex items-center border-r border-[#cfcfcf] pl-[7px] pt-px ${w}`}>{t}</div>
      ))}
      <div className="flex w-[122px] items-center gap-[3px] bg-[#fafafa] pl-[9px] pt-px font-bold">
        <svg width="11" height="11" viewBox="0 0 11 11" fill="none"><path d="M.5.5h10v10H.5zM5.5.5v10M.5 5.5h10" stroke="#666" /></svg>
        Dashboard 1
      </div>
      {[0, 1, 2].map((k) => (
        <div key={k} className="flex w-[32px] items-center justify-center border-r border-[#cfcfcf]">
          <svg width="16" height="17" viewBox="0 0 16 17" fill="none">
            {k === 0 && <><rect x="1.5" y="1.5" width="9" height="10" stroke="#777" /><path d="M4 8V6M6 8V3.5M8 8V5" stroke="#777" /></>}
            {k === 1 && <path d="M1.5 1.5h9v10h-9zM6 1.5v10M1.5 6.5h9" stroke="#777" />}
            {k === 2 && <path d="M1.5 2l3 1 3-1 3 1v8l-3-1-3 1-3-1zM4.5 3v8M7.5 2v8" stroke="#999" />}
            <path d="M8 12.5h7M11.5 9v7" stroke="#666" strokeWidth="1.8" />
          </svg>
        </div>
      ))}
    </div>
  );
}

function StatusBar() {
  return (
    <div className="flex h-[24px] shrink-0 justify-end bg-[#e9e9e9]">
      <div className="w-[31px] border-l border-[#cfcfcf]" />
      <div className="w-[57px] border-l border-[#cfcfcf]" />
      <div className="flex w-[71px] items-center justify-around border-l border-[#cfcfcf] px-[5px]">
        <svg width="8" height="9" viewBox="0 0 8 9"><path d="M0 0h1.5v9H0zM8 0v9L2.5 4.5z" fill="#bbb" /></svg>
        <svg width="6" height="9" viewBox="0 0 6 9"><path d="M6 0v9L0 4.5z" fill="#bbb" /></svg>
        <svg width="6" height="9" viewBox="0 0 6 9"><path d="M0 0v9l6-4.5z" fill="#bbb" /></svg>
        <svg width="8" height="9" viewBox="0 0 8 9"><path d="M6.5 0H8v9H6.5zM0 0v9l5.5-4.5z" fill="#bbb" /></svg>
      </div>
      <div className="flex w-[70px] items-center gap-[10px] border-l border-[#cfcfcf] pl-[8px]">
        <div className="grid h-[11px] w-[11px] grid-cols-3 gap-px">
          {[...Array(9)].map((_, i) => <div key={i} className="bg-[#bbb]" />)}
        </div>
        <svg width="11" height="11" viewBox="0 0 11 11"><rect width="11" height="7" fill="#bbb" /><rect y="8.5" width="3" height="2.5" fill="#bbb" /><rect x="4" y="8.5" width="3" height="2.5" fill="#bbb" /><rect x="8" y="8.5" width="3" height="2.5" fill="#bbb" /></svg>
        <div className="h-[11px] w-[11px] bg-[#666]" />
      </div>
    </div>
  );
}

export default function App() {
  return (
    <div className="flex h-screen w-full flex-col overflow-hidden bg-white font-['Lato',sans-serif]">
      <Toolbar />
      <div className="flex min-h-0 flex-1">
        <Sidebar />
        <Dashboard />
      </div>
      <Tabs />
      <StatusBar />
    </div>
  );
}
